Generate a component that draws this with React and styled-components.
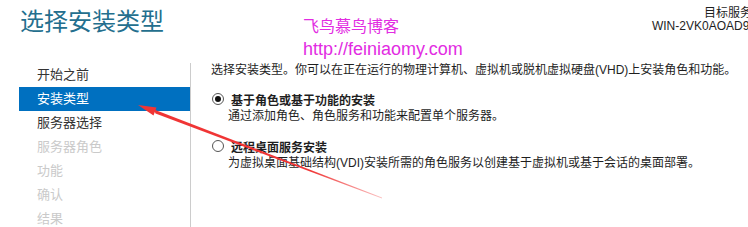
import React from 'react';
import styled, { createGlobalStyle } from 'styled-components';

const GlobalStyle = createGlobalStyle`
  html, body {
    margin: 0;
    padding: 0;
    background: #ffffff;
    overflow: hidden;
  }
  body {
    font-family: 'Liberation Sans', 'Noto Sans CJK SC', sans-serif;
  }
`;

const Page = styled.div`
  position: relative;
  width: 748px;
  height: 227px;
  overflow: hidden;
  background: #ffffff;
`;

const Header = styled.header`
  display: grid;
  grid-template-columns: 303px 1fr auto;
  height: 63px;
`;

const Title = styled.h1`
  margin: 0;
  padding: 7px 0 0 20px;
  font-size: 24px;
  line-height: 30px;
  font-weight: 400;
  color: #246f8e;
  white-space: nowrap;
`;

const Watermark = styled.div`
  padding-top: 17px;
  color: #e22ce2;
  white-space: nowrap;
`;

const WatermarkLine = styled.div`
  font-size: ${({ size }) => size}px;
  line-height: ${({ lh }) => lh}px;
`;

const ServerInfo = styled.div`
  padding-top: 7px;
  margin-right: -16px;
  text-align: right;
  font-size: 12px;
  line-height: 13px;
  color: #1e1e1e;
  white-space: nowrap;
`;

const Body = styled.div`
  display: grid;
  grid-template-columns: 172px 1fr;
  margin-left: 19px;
  height: 164px;
`;

const Sidebar = styled.nav`
  border-right: 1px solid #cccccc;
`;

const NavItem = styled.div`
  height: 24px;
  line-height: 24px;
  padding-left: 18px;
  font-size: 13px;
  white-space: nowrap;
  background: ${({ active }) => (active ? '#0070c0' : 'transparent')};
  color: ${({ active, disabled }) =>
    active ? '#ffffff' : disabled ? '#cacaca' : '#333333'};
`;

const Content = styled.main`
  padding-left: 20px;
  font-size: 12px;
  color: #1e1e1e;
  white-space: nowrap;
`;

const Intro = styled.p`
  margin: 0;
  line-height: 14px;
`;

const Option = styled.div`
  margin-top: ${({ gap }) => gap}px;
`;

const OptionTitle = styled.label`
  display: flex;
  align-items: center;
  height: 16px;
  gap: 7px;
  font-weight: 700;
`;

const Radio = styled.span`
  box-sizing: border-box;
  width: 12px;
  height: 12px;
  margin-left: 1px;
  border-radius: 50%;
  border: 1px solid #555555;
  background: #ffffff;
  display: flex;
  align-items: center;
  justify-content: center;

  &::after {
    content: '';
    width: 6px;
    height: 6px;
    border-radius: 50%;
    background: ${({ checked }) => (checked ? '#111111' : 'transparent')};
  }
`;

const OptionDesc = styled.div`
  padding-left: 17px;
  line-height: 18px;
`;

const Annotation = styled.svg`
  position: absolute;
  left: 0;
  top: 0;
  pointer-events: none;
`;

const steps = [
  { text: '开始之前' },
  { text: '安装类型', active: true },
  { text: '服务器选择' },
  { text: '服务器角色', disabled: true },
  { text: '功能', disabled: true },
  { text: '确认', disabled: true },
  { text: '结果', disabled: true },
];

const options = [
  {
    title: '基于角色或基于功能的安装',
    desc: '通过添加角色、角色服务和功能来配置单个服务器。',
    checked: true,
    gap: 14,
  },
  {
    title: '远程桌面服务安装',
    desc: '为虚拟桌面基础结构(VDI)安装所需的角色服务以创建基于虚拟机或基于会话的桌面部署。',
    gap: 13,
  },
];

const Arrow = () => (
  <Annotation width="748" height="227" viewBox="0 0 748 227">
    <defs>
      <linearGradient id="fade" x1="140" y1="105" x2="382" y2="198" gradientUnits="userSpaceOnUse">
        <stop offset="0" stopColor="#f03535" />
        <stop offset="0.7" stopColor="#f03535" />
        <stop offset="1" stopColor="#f03535" stopOpacity="0.3" />
      </linearGradient>
    </defs>
    <polygon points="138,105 156.5,107.5 153.5,115.5" fill="#f03535" />
    <polygon points="154,109.5 155.5,113.5 382,198.5 382,197.5" fill="url(#fade)" />
  </Annotation>
);

export default function App() {
  return (
    <Page>
      <GlobalStyle />
      <Header>
        <Title>选择安装类型</Title>
        <Watermark>
          <WatermarkLine size={16} lh={20}>飞鸟慕鸟博客</WatermarkLine>
          <WatermarkLine size={18} lh={24}>http://feiniaomy.com</WatermarkLine>
        </Watermark>
        <ServerInfo>
          <div>目标服务器</div>
          <div>WIN-2VK0AOAD9KL</div>
        </ServerInfo>
      </Header>
      <Body>
        <Sidebar>
          {steps.map((s) => (
            <NavItem key={s.text} active={s.active} disabled={s.disabled}>
              {s.text}
            </NavItem>
          ))}
        </Sidebar>
        <Content>
          <Intro>
            选择安装类型。你可以在正在运行的物理计算机、虚拟机或脱机虚拟硬盘(VHD)上安装角色和功能。
          </Intro>
          {options.map((o) => (
            <Option key={o.title} gap={o.gap}>
              <OptionTitle>
                <Radio checked={o.checked} />
                {o.title}
              </OptionTitle>
              <OptionDesc>{o.desc}</OptionDesc>
            </Option>
          ))}
        </Content>
      </Body>
      <Arrow />
    </Page>
  );
}
